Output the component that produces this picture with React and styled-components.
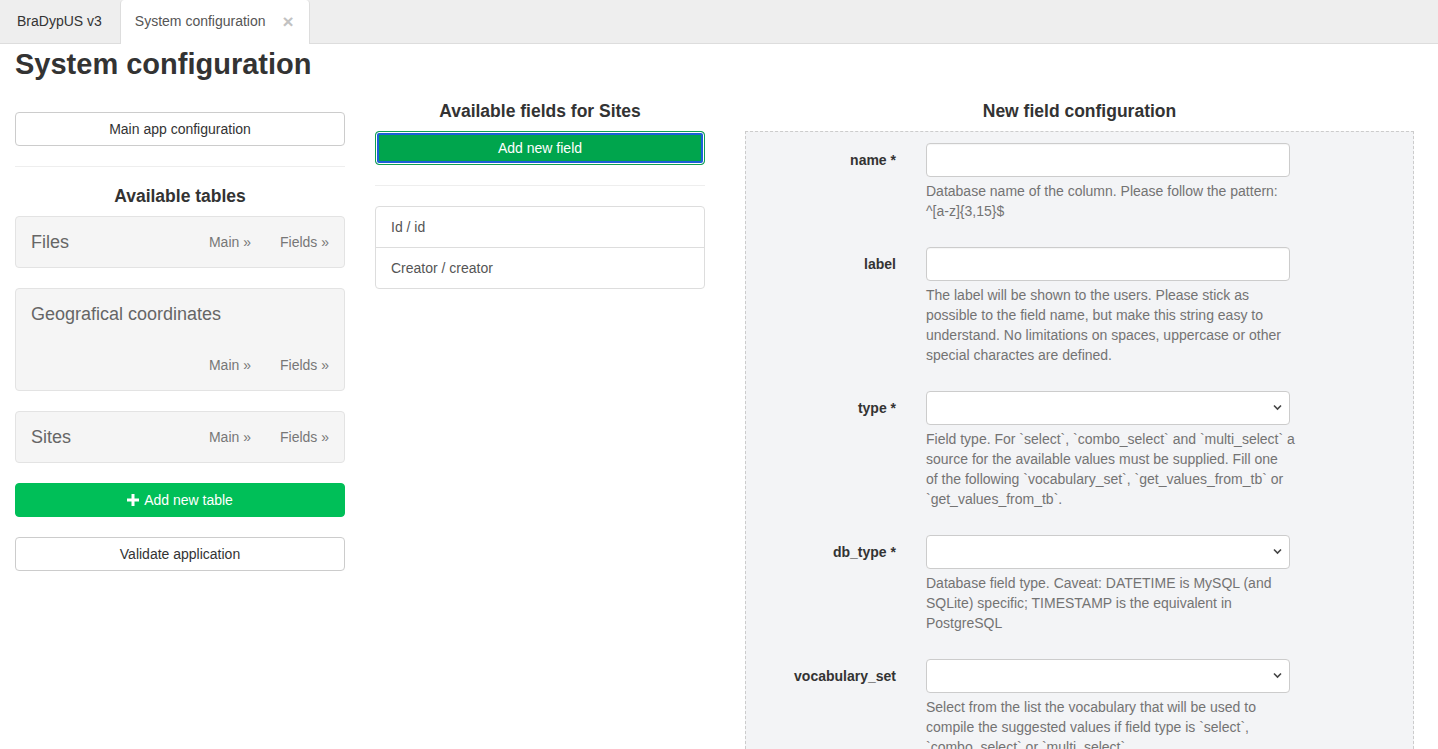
import styled, { createGlobalStyle } from 'styled-components'

const GlobalStyle = createGlobalStyle`
    html, body {
        margin: 0;
        padding: 0;
        background: #fff;
        font-family: "Liberation Sans", Arial, sans-serif;
        font-size: 14px;
        line-height: 20px;
        color: #333;
    }
    * { box-sizing: border-box; }
`

const TabBar = styled.div`
    display: flex;
    align-items: flex-end;
    height: 44px;
    background: #eee;
    border-bottom: 1px solid #ddd;
`

const Tab = styled.div`
    display: flex;
    align-items: center;
    gap: 17px;
    height: ${p => (p.active ? '44px' : '43px')};
    margin-bottom: ${p => (p.active ? '-1px' : '0')};
    margin-right: 2px;
    padding: 0 15px 2px;
    padding-left: ${p => (p.active ? '14px' : '16px')};
    background: ${p => (p.active ? '#fff' : 'transparent')};
    border-left: 1px solid ${p => (p.active ? '#ddd' : 'transparent')};
    border-right: 1px solid ${p => (p.active ? '#ddd' : 'transparent')};
    border-radius: 4px 4px 0 0;
    color: ${p => (p.active ? '#555' : '#333')};
    font-size: 14px;
`

const Close = styled.span`
    color: #c2c2c2;
    font-size: 19px;
    font-weight: bold;
    line-height: 1;
`

const Page = styled.div`
    padding: 0 15px;
`

const Title = styled.h1`
    margin: 4px 0 10px;
    font-size: 29px;
    line-height: 33px;
    font-weight: bold;
    color: #333;
`

const Row = styled.div`
    display: flex;
    align-items: flex-start;
`

const Column = styled.div`
    width: ${p => p.width}px;
    margin-left: ${p => p.offset || 0}px;
    flex: none;
`

const Heading = styled.h4`
    margin: 10px 0;
    font-size: 17.5px;
    line-height: 20px;
    font-weight: bold;
    text-align: center;
    color: #333;
`

const Button = styled.button`
    display: flex;
    align-items: center;
    justify-content: center;
    gap: 5px;
    width: 100%;
    height: 34px;
    margin-top: ${p => p.top || 0}px;
    padding: 6px 12px;
    font-family: inherit;
    font-size: 14px;
    border-radius: 4px;
    border: 1px solid ${p => (p.variant === 'success' ? '#00bf58' : '#ccc')};
    background: ${p => (p.variant === 'success' ? '#00bf58' : '#fff')};
    color: ${p => (p.variant === 'success' ? '#fff' : '#333')};
    cursor: pointer;
`

const FocusButton = styled(Button)`
    background: #00a54d;
    border-color: #10a050;
    box-shadow: inset 0 0 0 1px #fff, inset 0 0 0 3px #1d5fd8;
`

const Divider = styled.hr`
    margin: 20px 0 ${p => p.bottom || 20}px;
    border: 0;
    border-top: 1px solid #eee;
`

const Well = styled.div`
    display: flex;
    flex-wrap: wrap;
    justify-content: space-between;
    align-items: center;
    row-gap: 31px;
    margin-bottom: 20px;
    padding: 15px;
    background: #f5f5f5;
    border: 1px solid #e3e3e3;
    border-radius: 4px;
`

const WellTitle = styled.span`
    font-size: 18px;
    line-height: 20px;
    color: #666;
`

const WellLinks = styled.div`
    display: flex;
    gap: 29px;
    margin-left: auto;
`

const WellLink = styled.a`
    color: #777;
    text-decoration: none;
    font-size: 14px;
`

const ListGroup = styled.div`
    border: 1px solid #ddd;
    border-radius: 4px;
`

const ListItem = styled.div`
    padding: 10px 15px;
    color: #555;
    border-top: ${p => (p.first ? 'none' : '1px solid #ddd')};
`

const FormBox = styled.div`
    padding: 11px 0 10px;
    background: #f3f4f6;
    border: 1px dashed #ccc;
    min-height: 640px;
`

const FormGroup = styled.div`
    display: grid;
    grid-template-columns: 150px 364px;
    column-gap: 30px;
    margin-bottom: 26px;
`

const Label = styled.label`
    padding-top: 7px;
    text-align: right;
    font-weight: bold;
    font-size: 14px;
    color: #333;
`

const Input = styled.input`
    width: 100%;
    height: 34px;
    border: 1px solid #ccc;
    border-radius: 4px;
    background: #fff;
    box-shadow: inset 0 1px 1px rgba(0, 0, 0, 0.04);
`

const SelectWrap = styled.div`
    position: relative;
`

const Select = styled.select`
    appearance: none;
    width: 100%;
    height: 34px;
    border: 1px solid #ccc;
    border-radius: 4px;
    background: #fff;
`

const Chevron = styled.svg`
    position: absolute;
    right: 8px;
    top: 13px;
    pointer-events: none;
`

const Help = styled.p`
    grid-column: 2;
    margin: 4px 0 0;
    color: #737373;
    font-size: 14px;
    line-height: 20px;
`

const HelpLine = styled.span`
    display: block;
    white-space: nowrap;
`

const Plus = () => (
    <svg width="12" height="12" viewBox="0 0 12 12">
        <path d="M4.5 0h3v4.5H12v3H7.5V12h-3V7.5H0v-3h4.5z" fill="#fff" />
    </svg>
)

const tables = ['Files', 'Geografical coordinates', 'Sites']

// help lines are kept as the reference wraps them
const fields = [
    {
        label: 'name *',
        kind: 'input',
        help: [
            'Database name of the column. Please follow the pattern:',
            '^[a-z]{3,15}$',
        ],
    },
    {
        label: 'label',
        kind: 'input',
        help: [
            'The label will be shown to the users. Please stick as',
            'possible to the field name, but make this string easy to',
            'understand. No limitations on spaces, uppercase or other',
            'special charactes are defined.',
        ],
    },
    {
        label: 'type *',
        kind: 'select',
        help: [
            'Field type. For `select`, `combo_select` and `multi_select` a',
            'source for the available values must be supplied. Fill one',
            'of the following `vocabulary_set`, `get_values_from_tb` or',
            '`get_values_from_tb`.',
        ],
    },
    {
        label: 'db_type *',
        kind: 'select',
        help: [
            'Database field type. Caveat: DATETIME is MySQL (and',
            'SQLite) specific; TIMESTAMP is the equivalent in',
            'PostgreSQL',
        ],
    },
    {
        label: 'vocabulary_set',
        kind: 'select',
        help: [
            'Select from the list the vocabulary that will be used to',
            'compile the suggested values if field type is `select`,',
            '`combo_select` or `multi_select`',
        ],
    },
]

const App = () => {
  return (
    <>
        <GlobalStyle />
        <TabBar>
            <Tab>BraDypUS v3</Tab>
            <Tab active>
                System configuration
                <Close>×</Close>
            </Tab>
        </TabBar>
        <Page>
            <Title>System configuration</Title>
            <Row>
                <Column width={330}>
                    <Button top={21}>Main app configuration</Button>
                    <Divider bottom={19} />
                    <Heading>Available tables</Heading>
                    {tables.map(name => (
                        <Well key={name}>
                            <WellTitle>{name}</WellTitle>
                            <WellLinks>
                                <WellLink href="#">Main »</WellLink>
                                <WellLink href="#">Fields »</WellLink>
                            </WellLinks>
                        </Well>
                    ))}
                    <Button variant="success">
                        <Plus /> Add new table
                    </Button>
                    <Button top={20}>Validate application</Button>
                </Column>
                <Column width={330} offset={30}>
                    <Heading>Available fields for Sites</Heading>
                    <FocusButton variant="success">Add new field</FocusButton>
                    <Divider />
                    <ListGroup>
                        <ListItem first>Id / id</ListItem>
                        <ListItem>Creator / creator</ListItem>
                    </ListGroup>
                </Column>
                <Column width={669} offset={40}>
                    <Heading>New field configuration</Heading>
                    <FormBox>
                        {fields.map(f => (
                            <FormGroup key={f.label}>
                                <Label>{f.label}</Label>
                                {f.kind === 'input' ? (
                                    <Input type="text" />
                                ) : (
                                    <SelectWrap>
                                        <Select />
                                        <Chevron width="9" height="7" viewBox="0 0 9 7">
                                            <path d="M1 1.5l3.5 3.5L8 1.5" fill="none" stroke="#444" strokeWidth="1.6" />
                                        </Chevron>
                                    </SelectWrap>
                                )}
                                <Help>
                                    {f.help.map(line => (
                                        <HelpLine key={line}>{line}</HelpLine>
                                    ))}
                                </Help>
                            </FormGroup>
                        ))}
                    </FormBox>
                </Column>
            </Row>
        </Page>
    </>
  )
}

export default App
